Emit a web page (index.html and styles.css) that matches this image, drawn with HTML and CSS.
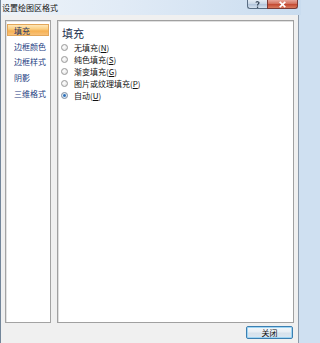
FILE: index.html
```html
<!DOCTYPE html>
<html lang="zh-CN">
<head>
<meta charset="utf-8">
<title>设置绘图区格式</title>
<link rel="stylesheet" href="styles.css">
</head>
<body>
<div class="window">
  <div class="titlebar">
    <span class="title">设置绘图区格式</span>
    <div class="caption-btns">
      <div class="cap-help">
        <svg width="19" height="9" viewBox="0 0 19 9"><path d="M8 2.6 C8 1.4 11 1.4 11 2.8 C11 4 9.5 3.9 9.5 5.6" fill="none" stroke="#2b3b4d" stroke-width="1.2"/><rect x="8.9" y="6.6" width="1.3" height="1.3" fill="#2b3b4d"/></svg>
      </div>
      <div class="cap-close">
        <svg width="31" height="9" viewBox="0 0 31 9"><path d="M12.5 1.8 L18.5 7.2 M18.5 1.8 L12.5 7.2" stroke="#ffffff" stroke-width="1.8"/></svg>
      </div>
    </div>
  </div>
  <div class="client">
    <div class="main">
      <ul class="nav">
        <li class="nav-item selected">填充</li>
        <li class="nav-item">边框颜色</li>
        <li class="nav-item">边框样式</li>
        <li class="nav-item">阴影</li>
        <li class="nav-item">三维格式</li>
      </ul>
      <div class="panel">
        <div class="heading">填充</div>
        <ul class="options">
          <li class="option"><span class="radio"></span><span class="label">无填充(<u>N</u>)</span></li>
          <li class="option"><span class="radio"></span><span class="label">纯色填充(<u>S</u>)</span></li>
          <li class="option"><span class="radio"></span><span class="label">渐变填充(<u>G</u>)</span></li>
          <li class="option"><span class="radio"></span><span class="label">图片或纹理填充(<u>P</u>)</span></li>
          <li class="option"><span class="radio checked"></span><span class="label">自动(<u>U</u>)</span></li>
        </ul>
      </div>
    </div>
    <div class="footer">
      <button class="close-btn">关闭</button>
    </div>
  </div>
</div>
</body>
</html>
```

FILE: styles.css
```css
* { box-sizing: border-box; }
html, body { margin: 0; padding: 0; }
body {
  width: 301px;
  height: 343px;
  overflow: hidden;
  font-family: "Noto Sans CJK SC", "Noto Sans", sans-serif;
  background: #cfe0f1;
}
.window {
  width: 301px;
  height: 343px;
  display: flex;
  flex-direction: column;
  border-left: 1px solid #73869a;
  background: #cfe0f1;
}
.titlebar {
  height: 15px;
  flex: none;
  display: flex;
  align-items: flex-start;
  justify-content: space-between;
  background: linear-gradient(to right, #edf3f9 0%, #e1ebf6 40%, #c9dcef 100%);
}
.title {
  font-size: 8px;
  line-height: 13px;
  color: #111;
  padding-left: 1px;
  padding-top: 1px;
}
.caption-btns {
  display: flex;
  margin-right: 3px;
}
.cap-help, .cap-close {
  height: 9px;
  border: 1px solid #5a6e84;
  border-top: none;
}
.cap-help {
  width: 20px;
  border-right: none;
  border-radius: 0 0 0 3px;
  background: linear-gradient(to bottom, #e4ecf5 0%, #c8d6e6 50%, #b3c6dc 55%, #d6e2ef 100%);
  display: flex;
}
.cap-close {
  width: 31px;
  border-radius: 0 0 3px 0;
  border-color: #7a3a36;
  background: linear-gradient(to bottom, #e7a59b 0%, #d4735f 45%, #c44a33 55%, #d97a5e 100%);
  display: flex;
}
.cap-help svg, .cap-close svg { display: block; }
.client {
  flex: 1;
  margin-right: 2px;
  border-right: 1px solid #8d9bab;
  background: #f0f0f0;
  padding: 5px 4px 4px 4px;
  display: flex;
  flex-direction: column;
}
.main {
  height: 303px;
  display: flex;
  gap: 6px;
}
.nav {
  width: 46px;
  margin: 0;
  padding: 3px 1px 0 1px;
  list-style: none;
  background: #fff;
  border: 1px solid #a3a3a3;
  box-shadow: inset 1px 1px 0 #e3e3e3;
}
.nav-item {
  height: 12px;
  margin-bottom: 3.7px;
  padding-left: 6px;
  font-size: 8px;
  line-height: 12px;
  color: #1a3c82;
  white-space: nowrap;
  border: 1px solid transparent;
}
.nav-item.selected {
  border-color: #e2a65a;
  background: linear-gradient(to bottom, #fee7b9 0%, #fbcf83 40%, #f6b153 60%, #f9c27a 100%);
  color: #1b3565;
}
.panel {
  flex: 1;
  background: #fff;
  border: 1px solid #a0a0a0;
  box-shadow: inset 1px 1px 0 #e0e0e0;
  padding: 5px 0 0 3px;
}
.heading {
  font-size: 11px;
  line-height: 14px;
  color: #1c2f4d;
  margin: 0 0 2px 1px;
}
.options {
  list-style: none;
  margin: 0;
  padding: 0;
}
.option {
  height: 11.8px;
  display: flex;
  align-items: center;
  gap: 6px;
}
.radio {
  width: 7px;
  height: 7px;
  border-radius: 50%;
  border: 1px solid #9a9a9a;
  background: radial-gradient(circle at 40% 40%, #ffffff 0%, #e9e9e9 60%, #d2d2d2 100%);
  flex: none;
}
.radio.checked {
  border-color: #7d8ca0;
  background: radial-gradient(circle at 50% 50%, #2f6db4 0%, #3e7fc4 35%, #d6e2ee 45%, #f4f7fa 100%);
}
.label {
  font-size: 8px;
  line-height: 11px;
  color: #111;
  white-space: nowrap;
}
.label u {
  text-decoration: underline;
}
.footer {
  display: flex;
  justify-content: flex-end;
  padding: 3px 1px 0 0;
}
.close-btn {
  width: 47px;
  height: 13px;
  margin: 0;
  padding: 0;
  font-family: "Noto Sans CJK SC", "Noto Sans", sans-serif;
  font-size: 8px;
  line-height: 11px;
  color: #111;
  border: 1px solid #3c7fb1;
  border-radius: 2px;
  box-shadow: inset 0 0 0 1px #9fd5f4;
  background: linear-gradient(to bottom, #f4f8fb 0%, #e8eef4 45%, #d7e2ec 55%, #dbe6f0 100%);
}
```
